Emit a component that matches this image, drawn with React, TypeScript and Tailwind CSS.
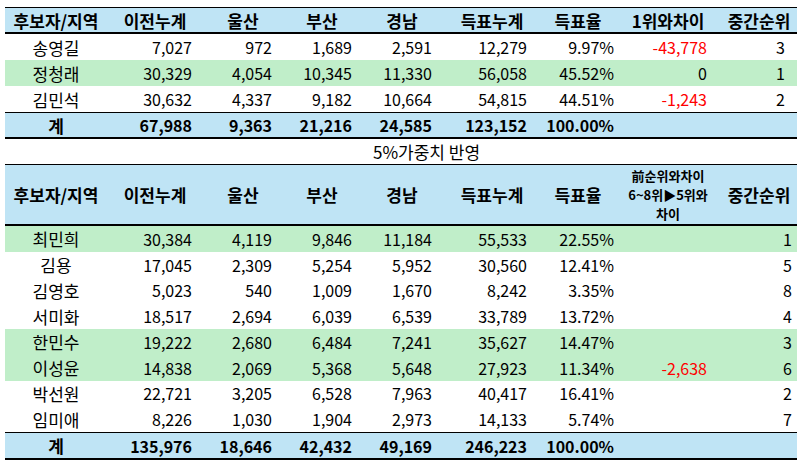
import React from "react";

const GRID = "grid grid-cols-[102px_96px_80px_78px_82px_98px_74px_106px_76px]";
const PADS = ["", "pr-[11px]", "pr-[11px]", "pr-[9px]", "pr-[11px]", "pr-[14px]", "pr-[1px]", "pr-[14px]"];

type R = { c: string[]; green?: boolean };

const t1: R[] = [
  { c: ["송영길", "7,027", "972", "1,689", "2,591", "12,279", "9.97%", "-43,778", "3"] },
  { c: ["정청래", "30,329", "4,054", "10,345", "11,330", "56,058", "45.52%", "0", "1"], green: true },
  { c: ["김민석", "30,632", "4,337", "9,182", "10,664", "54,815", "44.51%", "-1,243", "2"] },
];
const t1Total = ["계", "67,988", "9,363", "21,216", "24,585", "123,152", "100.00%", "", ""];

const t2: R[] = [
  { c: ["최민희", "30,384", "4,119", "9,846", "11,184", "55,533", "22.55%", "", "1"], green: true },
  { c: ["김용", "17,045", "2,309", "5,254", "5,952", "30,560", "12.41%", "", "5"] },
  { c: ["김영호", "5,023", "540", "1,009", "1,670", "8,242", "3.35%", "", "8"] },
  { c: ["서미화", "18,517", "2,694", "6,039", "6,539", "33,789", "13.72%", "", "4"] },
  { c: ["한민수", "19,222", "2,680", "6,484", "7,241", "35,627", "14.47%", "", "3"], green: true },
  { c: ["이성윤", "14,838", "2,069", "5,368", "5,648", "27,923", "11.34%", "-2,638", "6"], green: true },
  { c: ["박선원", "22,721", "3,205", "6,528", "7,963", "40,417", "16.41%", "", "2"] },
  { c: ["임미애", "8,226", "1,030", "1,904", "2,973", "14,133", "5.74%", "", "7"] },
];
const t2Total = ["계", "135,976", "18,646", "42,432", "49,169", "246,223", "100.00%", "", ""];

const headers = ["후보자/지역", "이전누계", "울산", "부산", "경남", "득표누계", "득표율"];

function DataRow({ r, h, lastPad }: { r: R; h: string; lastPad: string }) {
  return (
    <div className={`${GRID} ${h} items-center ${r.green ? "bg-[#c0eec9]" : "bg-white"}`}>
      {r.c.map((v, i) => {
        if (i === 0) return <div key={i} className="text-center text-[17px]">{v}</div>;
        const pad = i === 8 ? lastPad : PADS[i];
        const red = v.startsWith("-");
        return (
          <div key={i} className={`text-right ${pad} ${red ? "text-[#ff0000]" : "text-black"}`}>
            {v}
          </div>
        );
      })}
    </div>
  );
}

function TotalRow({ c, h }: { c: string[]; h: string }) {
  return (
    <div className={`${GRID} ${h} items-center bg-[#bfe4f5] font-bold border-t border-black border-b-2`}>
      {c.map((v, i) =>
        i === 0 ? (
          <div key={i} className="text-center text-[17px]">{v}</div>
        ) : (
          <div key={i} className={`text-right ${PADS[i] ?? ""}`}>{v}</div>
        )
      )}
    </div>
  );
}

export default function App() {
  return (
    <div className="w-[800px] h-[468px] bg-white pt-[7px] pl-[5px] text-[16px] leading-none text-black font-['Noto_Sans_CJK_KR',sans-serif]">
      <div className="w-[792px]">
        {/* Table 1 */}
        <div className="border-t border-black">
          <div className={`${GRID} h-[26px] items-center bg-[#bfe4f5] font-bold text-[17px] border-b-2 border-black`}>
            {headers.map((hd) => (
              <div key={hd} className="text-center">{hd}</div>
            ))}
            <div className="text-center">1위와차이</div>
            <div className="text-center">중간순위</div>
          </div>
          {t1.map((r, i) => (
            <DataRow key={i} r={r} h="h-[26px]" lastPad="pr-[12px]" />
          ))}
          <TotalRow c={t1Total} h="h-[27px]" />
        </div>

        {/* Caption */}
        <div className="h-[25px] flex items-center pl-[368px] text-[17px]">5%가중치 반영</div>

        {/* Table 2 */}
        <div className="border-t border-black">
          <div className={`${GRID} h-[61px] items-center bg-[#bfe4f5] font-bold text-[17px] border-b-2 border-black`}>
            {headers.map((hd) => (
              <div key={hd} className="text-center">{hd}</div>
            ))}
            <div className="text-center text-[13px] leading-[19px]">
              <div>前순위와차이</div>
              <div>6~8위▶5위와</div>
              <div>차이</div>
            </div>
            <div className="text-center">중간순위</div>
          </div>
          {t2.map((r, i) => (
            <DataRow key={i} r={r} h="h-[25.75px]" lastPad="pr-[5px]" />
          ))}
          <TotalRow c={t2Total} h="h-[28px]" />
        </div>
      </div>
    </div>
  );
}
